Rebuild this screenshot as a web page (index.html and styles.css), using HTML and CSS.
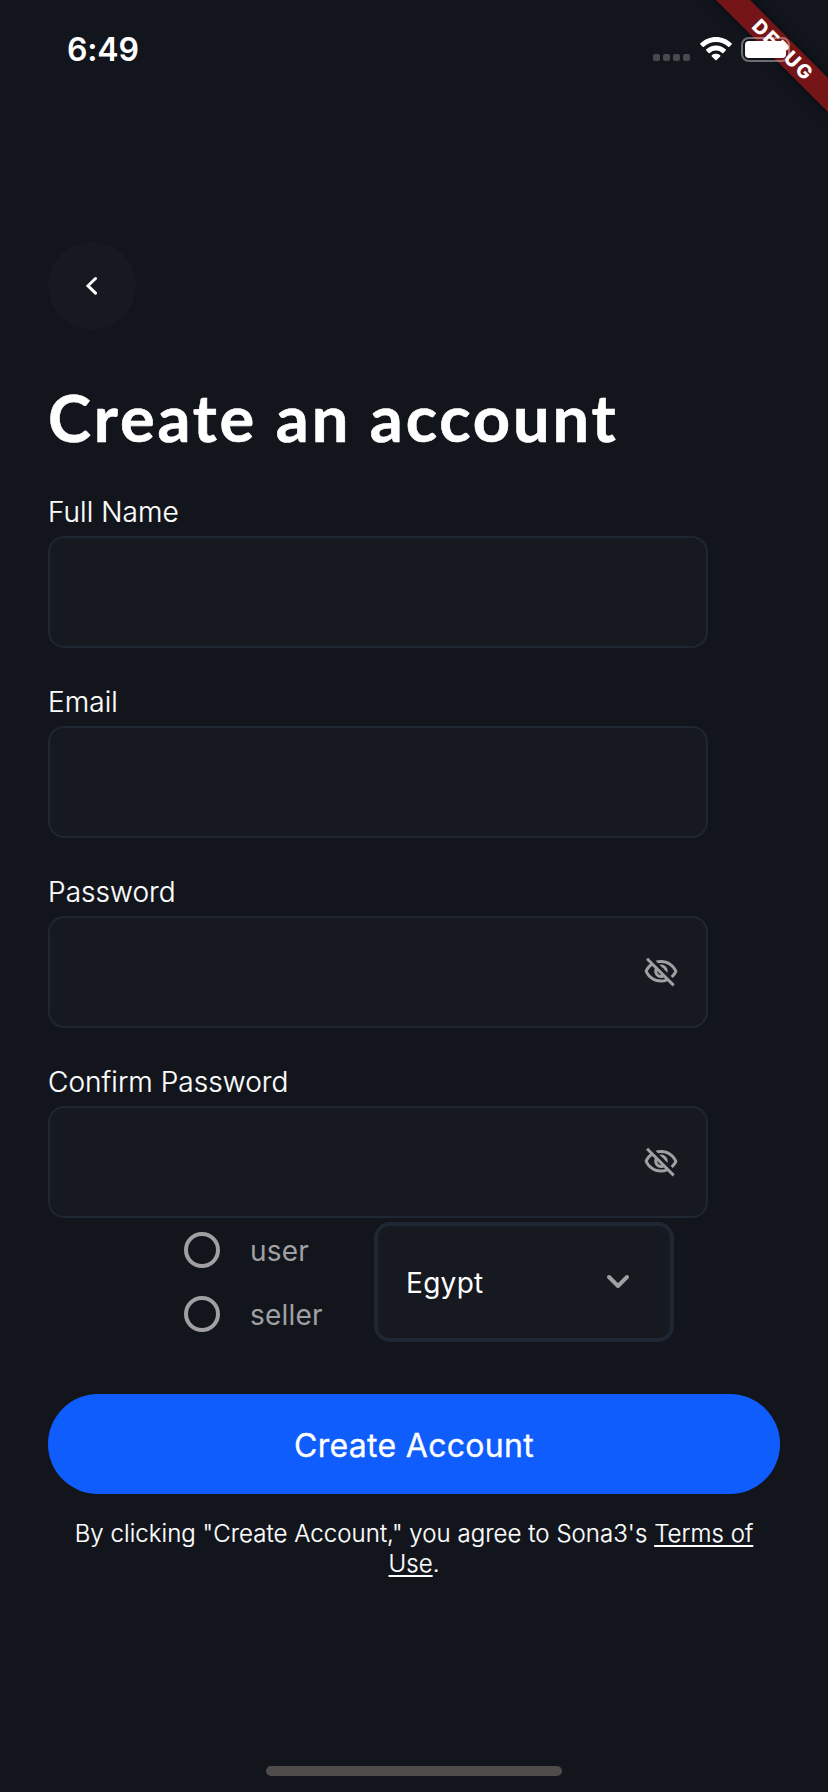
FILE: index.html
```
<!DOCTYPE html>
<html lang="en">
<head>
<meta charset="utf-8">
<title>Create an account</title>
<link rel="stylesheet" href="styles.css">
</head>
<body>
<svg width="0" height="0" class="defs" aria-hidden="true">
  <symbol id="eye-off" viewBox="0 0 24 24"><path d="M12 6c3.79 0 7.17 2.13 8.82 5.5-.59 1.22-1.42 2.27-2.41 3.12l1.41 1.41c1.39-1.23 2.49-2.77 3.18-4.53C21.27 7.11 17 4 12 4c-1.27 0-2.49.2-3.64.57l1.65 1.65C10.66 6.09 11.32 6 12 6zm-1.07 1.14L13 9.21c.57.25 1.03.71 1.28 1.28l2.07 2.07c.08-.34.14-.7.14-1.07C16.5 9.01 14.48 7 12 7c-.37 0-.72.05-1.07.14zM2.01 3.87l2.68 2.68C3.06 7.83 1.77 9.53 1 11.5 2.73 15.89 7 19 12 19c1.52 0 2.98-.29 4.32-.82l3.42 3.42 1.41-1.41L3.42 2.45 2.01 3.87zm7.5 7.5 2.61 2.61c-.04.01-.08.02-.12.02-1.38 0-2.5-1.12-2.5-2.5 0-.05.01-.08.01-.13zm-3.4-3.4 1.75 1.75c-.23.55-.36 1.15-.36 1.78 0 2.48 2.02 4.5 4.5 4.5.63 0 1.23-.13 1.77-.36l.98.98c-.88.24-1.8.38-2.75.38-3.79 0-7.17-2.13-8.82-5.5.7-1.43 1.72-2.61 2.93-3.53z"/></symbol>
</svg>
<div class="screen">
  <header class="status">
    <span class="time">6:49</span>
    <span class="dots"><i></i><i></i><i></i><i></i></span>
    <svg class="wifi" viewBox="0 0 32 25"><path d="M16 0C10 0 4.500 2.300.400 6.300c-.4.400-.4.900 0 1.300l2.200 2.200c.4.400.9.400 1.300 0A17.300 17.300 0 0 1 16 5c4.600 0 8.900 1.700 12.100 4.800.4.400.9.400 1.300 0l2.200-2.200c.4-.4.4-.9 0-1.300C27.500 2.300 22 0 16 0z"/><path d="M16 8.500c-3.700 0-7.100 1.400-9.700 3.800-.4.400-.4.900 0 1.300l2.300 2.300c.4.400.8.400 1.200 0A9 9 0 0 1 16 13.500a9 9 0 0 1 6.200 2.400c.4.400.8.400 1.200 0l2.300-2.300c.4-.4.4-.9 0-1.300A14.200 14.200 0 0 0 16 8.500z"/><path d="M16 16.800c-1.600 0-3 .5-4.200 1.400-.4.400-.4.900 0 1.200l3.600 3.700c.4.400.8.400 1.200 0l3.600-3.700c.4-.4.4-.9 0-1.200a6.800 6.800 0 0 0-4.200-1.400z"/></svg>
    <span class="battery"><i></i></span>
  </header>
  <div class="banner"><span>DEBUG</span></div>

  <main>
    <button class="back" aria-label="Back"><svg viewBox="0 0 12 20"><path d="M9.500 2.500 2 9.800l7.500 7.300"/></svg></button>
    <h1>Create an account</h1>
    <label class="field"><span class="name">Full Name</span><span class="box"></span></label>
    <label class="field"><span class="name">Email</span><span class="box"></span></label>
    <label class="field"><span class="name">Password</span><span class="box"><svg><use href="#eye-off"/></svg></span></label>
    <label class="field"><span class="name">Confirm Password</span><span class="box"><svg><use href="#eye-off"/></svg></span></label>
    <div class="options">
      <div class="radios">
        <label><i></i><span>user</span></label>
        <label><i></i><span>seller</span></label>
      </div>
      <div class="select"><span>Egypt</span><svg viewBox="0 0 24 16"><path d="m3 3 9 9 9-9"/></svg></div>
    </div>
    <button class="submit">Create Account</button>
    <p class="terms">By clicking "Create Account," you agree to Sona3's <u>Terms of</u><br><u>Use</u>.</p>
  </main>
  <div class="home"></div>
</div>
</body>
</html>
```
FILE: styles.css
```
* { box-sizing: border-box; }
body { margin: 0; background: #12151c; color: #fff; font-family: Inter, sans-serif; }
button { border: 0; padding: 0; color: inherit; font-family: inherit; }
.defs { position: absolute; }
.screen { position: relative; width: 828px; height: 1792px; overflow: hidden; display: flex; flex-direction: column; }
.status { position: relative; z-index: 2; height: 100px; padding: 37px 0 0 67px; display: flex; align-items: flex-start; }
.time { width: 586px; font-size: 32px; font-weight: 600; line-height: 26px; letter-spacing: -.2px; }
.dots { display: flex; gap: 3px; padding-top: 17px; width: 47px; }
.dots i { width: 7px; height: 7px; border-radius: 2px; background: #47494e; }
.wifi { width: 32px; height: 25px; fill: #fff; }
.battery { width: 49px; height: 25px; margin-left: 9px; padding: 2px; border: 2px solid rgba(255,255,255,.38); border-radius: 8px; }
.battery i { display: block; width: 41px; height: 17px; border-radius: 4px; background: #fff; }
/* Ribbon lying across the top right corner */
.banner { position: absolute; z-index: 1; left: 680.500px; top: 36px; width: 200px; height: 24px; background: #761518; box-shadow: 0 0 12px rgba(0,0,0,.5); transform: rotate(45deg); text-align: center; padding-left: 6px; font-size: 19.500px; font-weight: 800; line-height: 24px; letter-spacing: 2px; }
main { display: flex; flex-direction: column; align-items: flex-start; padding: 142px 48px 0; }
.back { width: 88px; height: 88px; border-radius: 50%; background: #161920; display: flex; align-items: center; justify-content: center; }
.back svg { width: 12px; height: 20px; fill: none; stroke: #fff; stroke-width: 3; stroke-linecap: round; }
h1 { margin: 47px 0 0; height: 114px; font: 700 65px/80px Lato, sans-serif; letter-spacing: 2.850px; white-space: nowrap; -webkit-text-stroke: .6px #fff; }
.field { display: flex; flex-direction: column; height: 190px; width: 660px; font-size: 28px; font-weight: 300; letter-spacing: .05px; }
.field:last-of-type { height: 154px; }
.name { height: 42px; line-height: 36px; -webkit-text-stroke: .2px #fff; }
.back + h1 + .field { margin-top: 3px; }
.box { display: flex; align-items: center; justify-content: flex-end; height: 112px; padding-right: 27px; border: 2px solid #1f2733; border-radius: 16px; background: #161920; }
.box svg { width: 36px; height: 36px; fill: #a0a0a3; }
.options { display: flex; align-items: flex-start; padding: 4px 0 0 136px; height: 176px; }
.radios { width: 190px; display: flex; flex-direction: column; gap: 28px; padding-top: 10px; }
.radios label { display: flex; align-items: center; gap: 30px; height: 36px; color: #a0a0a3; font-size: 28px; letter-spacing: .2px; }
.radios span, .select span { padding-top: 2px; }
.radios i { width: 36px; height: 36px; border: 4px solid #a0a0a3; border-radius: 50%; }
.select { width: 300px; height: 120px; border: 4px solid #1f2733; border-radius: 16px; background: #161920; display: flex; align-items: center; justify-content: space-between; padding: 0 40px 0 28px; font-size: 28px; letter-spacing: .3px; }
.select svg { width: 24px; height: 16px; fill: none; stroke: #a0a0a3; stroke-width: 4; stroke-linecap: round; stroke-linejoin: round; }
.submit { width: 732px; height: 100px; border-radius: 50px; background: #105dfd; font-size: 32px; font-weight: 400; letter-spacing: .3px; padding-top: 2px; -webkit-text-stroke: .3px #fff; }
.terms { margin: 25px 0 0; width: 732px; text-align: center; font-size: 24px; font-weight: 300; line-height: 30px; letter-spacing: .05px; white-space: nowrap; -webkit-text-stroke: .2px #fff; }
.terms u { text-decoration-thickness: 2px; text-underline-offset: 3px; text-decoration-skip-ink: none; }
.home { position: absolute; left: 266px; top: 1766px; width: 296px; height: 10px; border-radius: 5px; background: #4e4d4c; }
```
